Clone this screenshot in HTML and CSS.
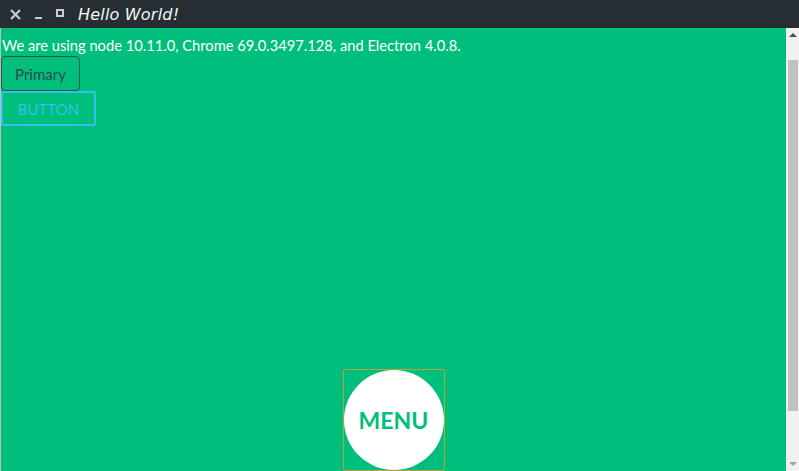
FILE: index.html
```html
<!DOCTYPE html>
<html>
<head>
<meta charset="utf-8">
<link rel="stylesheet" href="styles.css">
</head>
<body>
<div class="window">
  <div class="titlebar">
    <svg class="tb-close" width="11" height="11" viewBox="0 0 11 11"><path d="M1 1 L10 10 M10 1 L1 10" stroke="#c8ccd0" stroke-width="2.2" fill="none"/></svg>
    <span class="tb-btn tb-min"></span>
    <span class="tb-btn tb-max"></span>
    <span class="tb-title">Hello World!</span>
  </div>
  <div class="main">
    <div class="edge"></div>
    <div class="content">
      <p class="info">We are using node 10.11.0, Chrome 69.0.3497.128, and Electron 4.0.8.</p>
      <div class="buttons">
        <button class="btn btn-primary">Primary</button>
        <button class="btn btn-outline">BUTTON</button>
      </div>
      <div class="menu-wrap">
        <div class="menu-box">
          <div class="menu-circle">MENU</div>
        </div>
      </div>
    </div>
    <div class="scrollbar">
      <div class="arrow arrow-up"></div>
      <div class="track"><div class="thumb"></div></div>
      <div class="arrow arrow-down"></div>
    </div>
  </div>
</div>
</body>
</html>
```

FILE: styles.css
```css
html, body {
  margin: 0;
  padding: 0;
  width: 799px;
  height: 471px;
  overflow: hidden;
}
.window {
  width: 799px;
  height: 471px;
  display: flex;
  flex-direction: column;
  font-family: Lato, "Open Sans", sans-serif;
}
.titlebar {
  height: 28px;
  background: #262e34;
  display: flex;
  align-items: center;
  color: #ffffff;
  flex-shrink: 0;
}
.tb-btn {
  display: inline-block;
  color: #c8ccd0;
}
.tb-close {
  margin-left: 10px;
  display: block;
}
.tb-min {
  margin-left: 14px;
  width: 7px;
  height: 2px;
  background: #c8ccd0;
  margin-top: 8px;
}
.tb-max {
  margin-left: 14px;
  width: 4px;
  height: 4px;
  border: 2px solid #c8ccd0;
  margin-bottom: 2px;
}
.tb-title {
  margin-left: 14px;
  font-family: "DejaVu Sans", sans-serif;
  font-style: italic;
  font-size: 16px;
  font-weight: 300;
  letter-spacing: 0.2px;
  color: #f4f6f8;
}
.main {
  flex: 1;
  display: flex;
  min-height: 0;
}
.edge {
  width: 1px;
  background: #b9c2bc;
}
.content {
  flex: 1;
  background: #00be7c;
  display: flex;
  flex-direction: column;
  min-height: 0;
}
.info {
  margin: 8px 0 0 1px;
  color: #ffffff;
  font-size: 14.7px;
  line-height: 19px;
}
.buttons {
  display: flex;
  flex-direction: column;
  align-items: flex-start;
  margin-top: 1px;
}
.btn {
  font-family: Lato, sans-serif;
  font-size: 15px;
  background: transparent;
  border-radius: 4px;
  margin: 0;
  cursor: pointer;
}
.btn-primary {
  height: 35px;
  width: 79px;
  border: 1px solid #28574a;
  color: #2c4a52;
}
.btn-outline {
  height: 35px;
  width: 95px;
  border: 2px solid #33c0f0;
  border-radius: 2px;
  color: #2fc3ef;
}
.menu-wrap {
  margin-top: auto;
  display: flex;
  justify-content: center;
}
.menu-box {
  width: 100px;
  height: 100px;
  border: 1px solid #b8a23c;
  border-radius: 2px;
}
.menu-circle {
  width: 100px;
  height: 100px;
  border-radius: 50%;
  background: #ffffff;
  color: #00be7c;
  font-weight: bold;
  font-size: 23px;
  display: flex;
  align-items: center;
  justify-content: center;
}
.scrollbar {
  width: 13px;
  background: #f1f1f1;
  display: flex;
  flex-direction: column;
  align-items: center;
}
.arrow {
  width: 0;
  height: 0;
  border-left: 4px solid transparent;
  border-right: 4px solid transparent;
}
.arrow-up {
  margin-top: 5px;
  border-bottom: 4px solid #505050;
}
.arrow-down {
  margin-bottom: 5px;
  border-top: 4px solid #a3a3a3;
}
.track {
  flex: 1;
  width: 100%;
  padding: 23px 1px 51px 2px;
  box-sizing: border-box;
}
.thumb {
  height: 100%;
  background: #c1c1c1;
}
```
